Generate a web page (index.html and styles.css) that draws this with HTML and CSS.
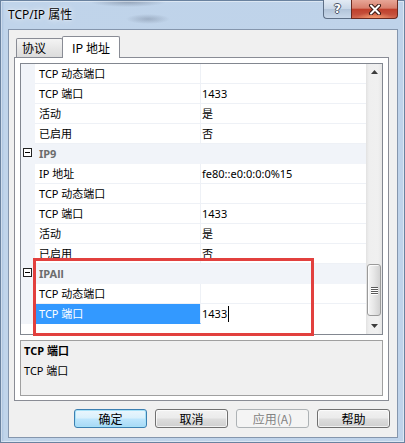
FILE: index.html
```html
<!DOCTYPE html>
<html lang="zh-CN">
<head>
<meta charset="utf-8">
<title>TCP/IP 属性</title>
<link rel="stylesheet" href="styles.css">
</head>
<body>
<div class="window">
  <div class="titlebar">
    <span class="title">TCP/IP 属性</span>
    <div class="caption-btns">
      <div class="cbtn help">?</div>
      <div class="cbtn close">
        <svg width="14" height="11" viewBox="0 0 14 11"><path d="M3 1.5 L11 9.5 M11 1.5 L3 9.5" stroke="#3b1a14" stroke-width="4" stroke-linecap="round"/><path d="M3 1.5 L11 9.5 M11 1.5 L3 9.5" stroke="#fff" stroke-width="2" stroke-linecap="round"/></svg>
      </div>
    </div>
  </div>
  <div class="client">
    <div class="tabs">
      <div class="tab">协议</div>
      <div class="tab active">IP 地址</div>
    </div>
    <div class="panel">
      <div class="grid">
        <div class="rows">
          <div class="row"><div class="gut"></div><div class="lab">TCP 动态端口</div><div class="val"></div></div>
          <div class="row"><div class="gut"></div><div class="lab">TCP 端口</div><div class="val">1433</div></div>
          <div class="row"><div class="gut"></div><div class="lab">活动</div><div class="val">是</div></div>
          <div class="row"><div class="gut"></div><div class="lab">已启用</div><div class="val">否</div></div>
          <div class="row cat"><div class="gut"><svg width="9" height="9" viewBox="0 0 9 9"><rect x="0.5" y="0.5" width="8" height="8" fill="#fff" stroke="#222"/><path d="M2 4.5 H7" stroke="#000"/></svg></div><div class="catlab">IP9</div></div>
          <div class="row"><div class="gut"></div><div class="lab">IP 地址</div><div class="val">fe80::e0:0:0:0%15</div></div>
          <div class="row"><div class="gut"></div><div class="lab">TCP 动态端口</div><div class="val"></div></div>
          <div class="row"><div class="gut"></div><div class="lab">TCP 端口</div><div class="val">1433</div></div>
          <div class="row"><div class="gut"></div><div class="lab">活动</div><div class="val">是</div></div>
          <div class="row"><div class="gut"></div><div class="lab">已启用</div><div class="val">否</div></div>
          <div class="row cat"><div class="gut"><svg width="9" height="9" viewBox="0 0 9 9"><rect x="0.5" y="0.5" width="8" height="8" fill="#fff" stroke="#222"/><path d="M2 4.5 H7" stroke="#000"/></svg></div><div class="catlab">IPAll</div></div>
          <div class="row"><div class="gut"></div><div class="lab">TCP 动态端口</div><div class="val"></div></div>
          <div class="row"><div class="gut"></div><div class="lab sel">TCP 端口</div><div class="val edit">1433<span class="caret"></span></div></div>
        </div>
        <div class="scrollbar">
          <div class="sb-btn"><svg width="7" height="4" viewBox="0 0 7 4"><path d="M3.5 0 L7 4 H0 Z" fill="#3c3c3c"/></svg></div>
          <div class="sb-track">
            <div class="thumb"><div class="grip"><i></i><i></i><i></i><i></i></div></div>
          </div>
          <div class="sb-btn"><svg width="7" height="4" viewBox="0 0 7 4"><path d="M0 0 H7 L3.5 4 Z" fill="#3c3c3c"/></svg></div>
        </div>
      </div>
      <div class="desc">
        <div class="desc-title">TCP 端口</div>
        <div class="desc-text">TCP 端口</div>
      </div>
      <div class="mark"></div>
    </div>
    <div class="buttons">
      <div class="btn default">确定</div>
      <div class="btn">取消</div>
      <div class="btn disabled">应用(A)</div>
      <div class="btn">帮助</div>
    </div>
  </div>
</div>
</body>
</html>
```
FILE: styles.css
```css
* { box-sizing: border-box; margin: 0; padding: 0; }
html, body { width: 405px; height: 443px; overflow: hidden; }
body {
  font-family: "Noto Sans", "Noto Sans CJK SC", sans-serif;
  font-size: 11px;
  color: #000;
  background: #fff;
}
.window {
  width: 405px;
  height: 443px;
  display: flex;
  flex-direction: column;
  padding: 0 7px 5px 8px;
  background:
    radial-gradient(ellipse 38px 5px at 128px 2px, rgba(70,80,100,.35), rgba(70,80,100,0)),
    radial-gradient(ellipse 22px 5px at 148px 19px, rgba(70,80,100,.28), rgba(70,80,100,0)),
    linear-gradient(to right, #98b4d6 0, #c0d4ea 4px, #bfd3ea 100%);
  box-shadow: inset 0 0 0 1px #6a829f, inset 0 0 0 2px rgba(255,255,255,.45);
}
.titlebar {
  height: 29px;
  flex: none;
  display: flex;
  justify-content: space-between;
  align-items: flex-start;
}
.title {
  font-family: "Noto Sans", "Noto Sans CJK SC", sans-serif;
  font-size: 12px;
  line-height: 16px;
  margin-top: 7px;
  color: #000;
  text-shadow: 0 0 6px rgba(255,255,255,.9), 0 0 2px rgba(255,255,255,.9);
}
.caption-btns { display: flex; }
.cbtn {
  height: 19px;
  display: flex;
  align-items: center;
  justify-content: center;
  border: 1px solid #5e6f86;
  border-top: none;
}
.help {
  width: 28px;
  border-radius: 0 0 0 4px;
  border-right: none;
  background: linear-gradient(#e3ebf4, #c9d7e7 48%, #b2c4d9 52%, #c9d8ea);
  font-family: "DejaVu Sans", sans-serif;
  font-weight: bold;
  font-size: 12px;
  color: #fff;
  text-shadow: -1px 0 #4a5668, 1px 0 #4a5668, 0 -1px #4a5668, 0 1px #4a5668;
}
.close {
  width: 47px;
  border-color: #6a2a20;
  border-radius: 0 0 4px 0;
  background:
    radial-gradient(ellipse 18px 6px at 50% 100%, rgba(255,170,120,.8), rgba(255,170,120,0)),
    linear-gradient(#e7a697, #d8806e 45%, #c0402c 52%, #c4503c 80%, #d46a52);
}
.client {
  flex: 1;
  display: flex;
  flex-direction: column;
  background: #f0f0f0;
  border: 1px solid #8596ad;
  padding: 6px 8px 0 5px;
}
.tabs {
  height: 21px;
  display: flex;
  align-items: flex-end;
  padding-left: 2px;
  position: relative;
  z-index: 1;
  font-family: "Noto Sans CJK SC", sans-serif;
  font-size: 12px;
}
.tab {
  height: 19px;
  width: 47px;
  padding-left: 5px;
  line-height: 18px;
  border: 1px solid #898c95;
  border-bottom: none;
  border-radius: 2px 2px 0 0;
  background: linear-gradient(#f4f4f4, #e6e6e6 55%, #dcdcdc);
}
.tab.active {
  height: 22px;
  width: 58px;
  margin-left: -1px;
  margin-bottom: -1px;
  padding-left: 0;
  text-align: center;
  line-height: 21px;
  background: #fff;
}
.panel {
  position: relative;
  height: 344px;
  flex: none;
  background: #fff;
  border: 1px solid #898c95;
  padding: 5px 5px 4px 5px;
  display: flex;
  flex-direction: column;
  gap: 5px;
}
.grid {
  height: 272px;
  flex: none;
  display: flex;
  border: 1px solid #828790;
  background: #fff;
}
.rows {
  flex: 1;
  display: flex;
  flex-direction: column;
  overflow: hidden;
}
.row {
  height: 20px;
  flex: none;
  display: flex;
  line-height: 19px;
  white-space: nowrap;
}
.gut {
  width: 14px;
  flex: none;
  background: #f1f4f9;
  padding: 4px 0 0 2px;
  line-height: 0;
}
.lab {
  width: 166px;
  flex: none;
  padding-left: 4px;
  border-right: 1px solid #eef1f6;
  border-bottom: 1px solid #eef1f6;
}
.lab.sel {
  background: #3399ff;
  color: #fff;
  border-bottom-color: #3399ff;
}
.val {
  flex: 1;
  padding-left: 1px;
  border-bottom: 1px solid #eef1f6;
}
.val.edit { border-bottom-color: #fff; }
.caret {
  display: inline-block;
  width: 1px;
  height: 16px;
  background: #000;
  vertical-align: -4px;
  margin-left: 1px;
}
.catlab {
  flex: 1;
  background: #f1f4f9;
  padding-left: 4px;
  font-weight: bold;
  color: #6d6d6d;
}
.scrollbar {
  width: 16px;
  flex: none;
  display: flex;
  flex-direction: column;
  background: linear-gradient(to right, #e2e2e2, #efefef 3px, #f0f0f0 12px, #e6e6e6);
}
.sb-btn {
  height: 16px;
  flex: none;
  display: flex;
  align-items: center;
  justify-content: center;
  padding-left: 1px;
}
.sb-track {
  flex: 1;
  display: flex;
  flex-direction: column;
  justify-content: flex-end;
  padding-bottom: 2px;
}
.thumb {
  height: 52px;
  margin: 0 1px;
  border: 1px solid #9a9a9a;
  border-radius: 3px;
  background: linear-gradient(to right, #f6f6f6, #e6e6e6 50%, #d2d2d2);
  box-shadow: inset 1px 1px 0 rgba(255,255,255,.8);
  display: flex;
  align-items: center;
  justify-content: center;
}
.grip { display: flex; flex-direction: column; gap: 1px; }
.grip i {
  display: block;
  width: 7px;
  height: 1px;
  background: #5a5a5a;
  box-shadow: 0 1px 0 #fff;
}
.desc {
  height: 56px;
  flex: none;
  border: 1px solid #a0a0a0;
  background: #f0f0f0;
  padding: 2px 3px;
  line-height: 16px;
}
.desc-title { font-weight: bold; }
.desc-text { margin-top: 4px; }
.mark {
  position: absolute;
  left: 18px;
  top: 200px;
  width: 281px;
  height: 78px;
  border: 3px solid #e2403e;
}
.buttons {
  display: flex;
  justify-content: flex-end;
  gap: 8px;
  margin-top: 8px;
  margin-right: -1px;
}
.btn {
  width: 73px;
  height: 19px;
  border: 1px solid #707070;
  border-radius: 3px;
  background: linear-gradient(#f2f2f2, #ebebeb 48%, #dddddd 52%, #cfcfcf);
  box-shadow: inset 0 0 0 1px rgba(255,255,255,.7);
  font-family: "Noto Sans CJK SC", sans-serif;
  font-size: 12px;
  line-height: 17px;
  text-align: center;
}
.btn.default {
  border-color: #3c7fb1;
  background: linear-gradient(#eaf6fd, #d9f0fc 48%, #bee6fd 52%, #a7d9f5);
  box-shadow: inset 0 0 0 1px #a6e1f8;
}
.btn.disabled {
  border-color: #adb2b5;
  background: #f4f4f4;
  color: #838383;
  box-shadow: none;
}
```
